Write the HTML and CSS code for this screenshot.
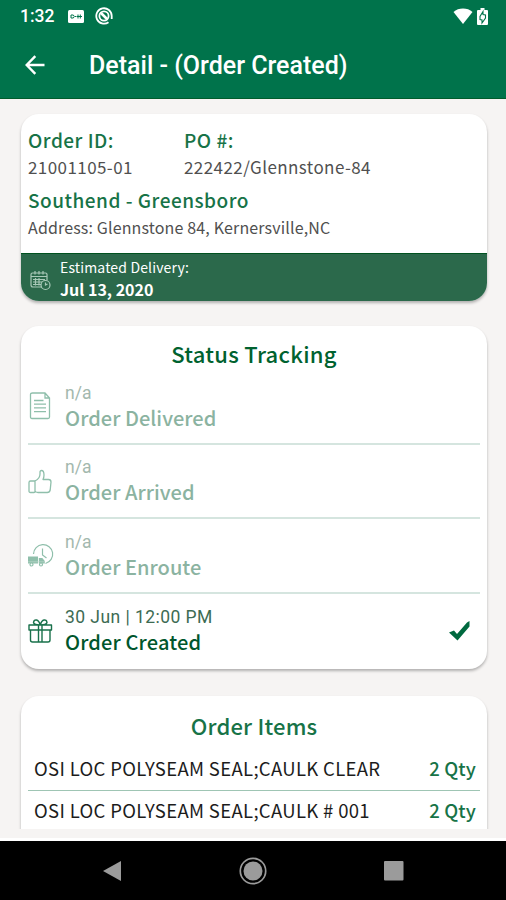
FILE: index.html
```html
<!DOCTYPE html>
<html lang="en">
<head>
<meta charset="utf-8">
<title>Detail - (Order Created)</title>
<link rel="stylesheet" href="styles.css">
</head>
<body>
<header class="header">
  <div class="status-bar">
    <span class="clock">1:32</span>
    <svg class="ic-card" width="16" height="13" viewBox="0 0 16 13"><rect width="16" height="13" rx="1.5" fill="#fff"/><path d="M3 5h2.300l1 1.500-1 1.500H3zM7 6.500h1.500M10 4.500v4M12.300 4.500v4M9 6.500h5" fill="none" stroke="#00734b" stroke-width="1"/></svg>
    <svg class="ic-at" width="18" height="18" viewBox="0 0 18 18" fill="none" stroke="#fff"><path d="M13.500 15.200A7.700 7.700 0 1 1 16.700 9v3" stroke-width="1.800"/><circle cx="9" cy="9" r="4.600" stroke-width="1.800"/><path d="M6 6l6 6" stroke-width="2.600"/></svg>
    <span class="spacer"></span>
    <svg class="ic-wifi" width="20" height="17" viewBox="0 0 20 17"><path d="M0.500 4C5.500-.600 14.500-.600 19.500 4L10 16z" fill="#fff"/></svg>
    <svg class="ic-batt" width="11" height="17" viewBox="0 0 11 17"><path d="M3.500 0h4v2H10q1 0 1 1v13q0 1-1 1H1q-1 0-1-1V3q0-1 1-1h2.500z" fill="#fff"/><path d="M6 3.500 3 8.500v3l2 .500v3l3.500-5V7L6 6.500z" fill="none" stroke="#00734b" stroke-width="1.100"/></svg>
  </div>
  <div class="title-bar">
    <svg class="ic-back" width="20" height="20" viewBox="0 0 20 20" fill="none" stroke="#fff" stroke-width="2.400"><path d="M19.500 10H2M10.300 1.200 1.700 10l8.600 8.800"/></svg>
    <h1 class="title">Detail - (Order Created)</h1>
  </div>
</header>
<main class="content">
  <section class="card order">
    <div class="order-grid">
      <div class="label">Order ID:</div>
      <div class="label">PO #:</div>
      <div class="value">21001105-01</div>
      <div class="value">222422/Glennstone-84</div>
    </div>
    <div class="label site">Southend - Greensboro</div>
    <div class="address">Address: Glennstone 84, Kernersville,NC</div>
    <div class="banner">
      <svg width="21" height="21" viewBox="0 0 21 21" fill="none" stroke="#a9c9b8" stroke-width="1.200"><path d="M12 17H3Q1 17 1 15V4.500Q1 3 2.500 3h13Q17 3 17 4.500V10M1 6.500h16M5 1v3.500M9 1v3.500M13 1v3.500M3 9.500h12M3 12h9M3 14.500h8M5.500 8v7.500M9 8v7.500"/><circle cx="15.500" cy="15" r="4.500"/><path d="M15.500 12.500V15l2-1"/></svg>
      <div class="banner-text">
        <div class="est">Estimated Delivery:</div>
        <div class="date">Jul 13, 2020</div>
      </div>
    </div>
  </section>

  <section class="card tracking">
    <h2 class="heading heading-status">Status Tracking</h2>
    <div class="step pending">
      <svg class="step-icon" width="26" height="28" viewBox="0 0 26 28" fill="none" stroke="#8fbfab" stroke-width="1.300"><path d="M4.500 1h12.500L21.500 6V25q0 1.500-1.500 1.500h-16Q2.500 26.500 2.500 25V2.500Q2.500 1 4.500 1zM17 1v5h4.500M6 8.500h9.500M6 12.200h12M6 15.900h12M6 19.600h12"/></svg>
      <div class="step-text"><div class="when">n/a</div><div class="what">Order Delivered</div></div>
    </div>
    <div class="step pending">
      <svg class="step-icon" width="26" height="28" viewBox="0 0 26 28" fill="none" stroke="#8fbfab" stroke-width="1.300" stroke-linejoin="round"><path d="M7 14v10.500q0 1-1 1H2.500q-1.500 0-1.500-1.500V15.500Q1 14 2.500 14zQ12 11.500 12 7V5q0-1.500 1.500-1.500Q16 3.500 16 8 16 10.500 15 12.500h5.500q2.500 0 2.500 2.500L22.200 23q-.5 2.500-3 2.500H10Q8 25.500 7 24"/></svg>
      <div class="step-text"><div class="when">n/a</div><div class="what">Order Arrived</div></div>
    </div>
    <div class="step pending">
      <svg class="step-icon" width="26" height="28" viewBox="0 0 26 28" fill="none" stroke="#8fbfab" stroke-width="1.200"><path d="M5.500 13A9.600 9.600 0 1 1 17.500 22.500M14.500 7.500v6.500l4 3"/><path d="M0 15.500h10v7H0zM10.800 17h3.500l2.500 3v2.500h-6z" fill="#8fbfab" stroke="none"/><path d="M0 20.800h17" stroke="#c4dcd1" stroke-width=".6"/><circle cx="3.500" cy="23.500" r="1.500" fill="#fff"/><circle cx="13" cy="23.500" r="1.500" fill="#fff"/></svg>
      <div class="step-text"><div class="when">n/a</div><div class="what">Order Enroute</div></div>
    </div>
    <div class="step done">
      <svg class="step-icon" width="26" height="28" viewBox="0 0 26 28" fill="none" stroke="#19714b" stroke-width="1.400" stroke-linejoin="round"><path d="M1 8h22.500v5H1zM2.500 13v10q0 2 2 2H20q2 0 2-2V13M10.500 8v17M14 8v17M12 8Q6 8 5.500 5.500 6 2.500 8.500 3 11 3.500 12.200 8M12.500 8q6 0 6.500-2.500-.5-3-3-2.500-2.500.5-3.700 5"/></svg>
      <div class="step-text"><div class="when">30 Jun | 12:00 PM</div><div class="what">Order Created</div></div>
      <svg class="tick" width="21" height="20" viewBox="0 0 21 20"><path d="M0 11.500 5 9.500 8 13 18 1.500 20.500 0v5.500L8.500 19.500z" fill="#00693f"/></svg>
    </div>
  </section>

  <section class="card items">
    <h2 class="heading heading-items">Order Items</h2>
    <div class="item"><span>OSI LOC POLYSEAM SEAL;CAULK CLEAR</span><span class="qty">2 Qty</span></div>
    <div class="item"><span>OSI LOC POLYSEAM SEAL;CAULK # 001</span><span class="qty">2 Qty</span></div>
  </section>
</main>
<nav class="nav">
  <svg width="20" height="22" viewBox="0 0 20 22"><path d="M1 11 19 1v20z" fill="#9b9b9b"/></svg>
  <svg width="28" height="28" viewBox="0 0 28 28"><circle cx="14" cy="14" r="9.500" fill="#9b9b9b"/><circle cx="14" cy="14" r="12.700" fill="none" stroke="#9b9b9b" stroke-width="1.700"/></svg>
  <svg width="20" height="20" viewBox="0 0 20 20"><rect width="19.500" height="19.500" rx="1" fill="#9b9b9b"/></svg>
</nav>
</body>
</html>
```
FILE: styles.css
```css
* { box-sizing: border-box; }
body {
  margin: 0;
  width: 506px;
  height: 900px;
  display: flex;
  flex-direction: column;
  overflow: hidden;
  background: #f6f4f3;
  font-family: "Noto Sans CJK SC", "Noto Sans", sans-serif;
  color: #505050;
}
h1, h2 { margin: 0; }
svg { display: block; flex: none; }
.header {
  flex: none;
  height: 99px;
  background: #00734b;
  border-bottom: 1px solid #005c2c;
  color: #fff;
  font-family: Roboto, sans-serif;
}
.status-bar { display: flex; align-items: center; height: 32px; padding: 0 18px 0 20px; }
.clock { width: 48px; font-size: 17.500px; font-weight: 500; }
.ic-at { margin-left: 11px; }
.spacer { flex: 1; }
.ic-batt { margin-left: 4px; }
.title-bar { display: flex; align-items: center; height: 66px; padding-left: 25px; }
.title { margin: 2px 0 0 44px; font-size: 25px; font-weight: 500; line-height: 32px; white-space: nowrap; }
.content { flex: none; height: 730px; padding: 15px 19px 0 21px; overflow: hidden; }
.card {
  background: #fff;
  border-radius: 18px;
  box-shadow: 0 2px 3px rgba(0, 0, 0, .28);
}
.order { display: flex; flex-direction: column; height: 187px; overflow: hidden; padding-top: 12px; white-space: nowrap; }
.order-grid { display: grid; grid-template-columns: 156px 1fr; grid-template-rows: 27px 28px; padding-left: 7px; }
.label { font-size: 19px; font-weight: 500; line-height: 27px; letter-spacing: .5px; color: #177347; }
.value { font-size: 17px; line-height: 27px; letter-spacing: .42px; }
.site { padding-left: 7px; height: 34px; line-height: 38px; }
.address { padding-left: 7px; font-size: 16px; line-height: 24px; letter-spacing: .15px; }
.banner { display: flex; align-items: center; height: 48px; margin-top: auto; padding: 5px 0 0 9px; background: #2b694b; border-top: 1px solid #005220; color: #fff; }
.banner-text { margin: -5px 0 0 9px; }
.est { font-size: 14px; line-height: 22px; letter-spacing: .15px; }
.date { font-size: 16px; line-height: 22px; font-weight: 700; }
.tracking { height: 343px; margin-top: 25px; padding: 10px 7px 0; }
.heading { text-align: center; font-size: 22px; line-height: 35px; font-weight: 500; }
.heading-status { margin-bottom: -1px; color: #00622f; letter-spacing: .3px; }
.heading-items { margin-bottom: 6px; color: #177347; letter-spacing: .2px; }
.step { display: flex; align-items: center; height: 74.500px; border-bottom: 2px solid #d5e5df; white-space: nowrap; }
.step:last-child { border: 0; }
.step-icon { margin-right: 11px; }
.step-text { padding-bottom: 6px; }
.when { font-family: Roboto, sans-serif; font-size: 17.500px; line-height: 28px; }
.what { font-size: 20px; line-height: 21px; font-weight: 500; letter-spacing: .05px; }
.pending .when { color: #a3b8ae; }
.pending .what { color: #8bb3a1; }
.done .when { color: #3d6b53; letter-spacing: .45px; }
.done .what { color: #00562c; letter-spacing: .15px; }
.tick { margin: 0 10px 0 auto; }
.items { height: 200px; margin-top: 27px; padding: 12px 7px 0; }
.item { display: flex; justify-content: space-between; height: 42px; padding: 0 4px 0 6px; border-bottom: 1px solid #9fc5b4; font-size: 18.500px; line-height: 39px; letter-spacing: .33px; color: #1c1c1c; white-space: nowrap; }
.qty { color: #177347; font-weight: 500; letter-spacing: .15px; }
.nav { flex: 1; display: flex; align-items: center; justify-content: space-between; margin-top: 9px; padding: 0 102px; border-top: 3px solid #fff; background: #000; }
```
